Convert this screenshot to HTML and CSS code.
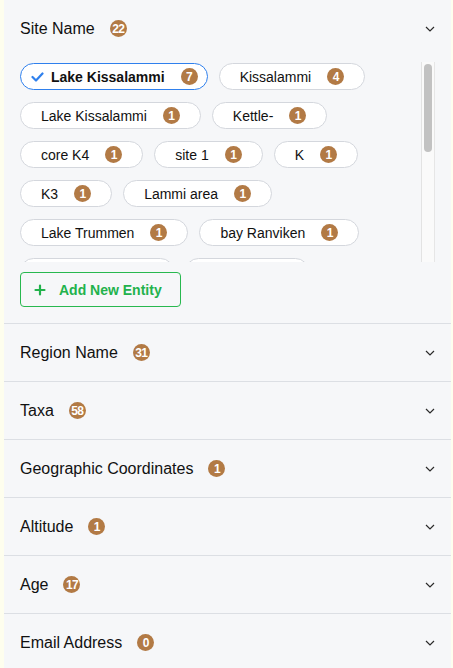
FILE: index.html
```html
<!DOCTYPE html>
<html lang="en">
<head>
<meta charset="utf-8">
<title>Entities</title>
<link rel="stylesheet" href="styles.css">
</head>
<body>
<div class="panel">
  <section class="acc">
    <div class="acc-head">
      <div class="acc-title"><span class="label">Site Name</span><span class="badge">22</span></div>
      <svg class="chev" width="10" height="6" viewBox="0 0 10 6"><polyline points="1,1 5,5 9,1" fill="none" stroke="#2b2b2b" stroke-width="1.2"/></svg>
    </div>
    <div class="acc-body">
      <div class="chip-scroll">
        <div class="chip-viewport">
          <div class="chips">
            <span class="chip selected"><svg class="check" width="13" height="10" viewBox="0 0 13 10"><polyline points="1.5,5 5,8.5 11.5,1.5" fill="none" stroke="#2f80ed" stroke-width="2.2" stroke-linecap="round" stroke-linejoin="round"/></svg><span class="chip-text">Lake Kissalammi</span><span class="badge">7</span></span>
            <span class="chip"><span class="chip-text">Kissalammi</span><span class="badge">4</span></span>
            <span class="chip"><span class="chip-text">Lake Kissalammi</span><span class="badge">1</span></span>
            <span class="chip"><span class="chip-text">Kettle-</span><span class="badge">1</span></span>
            <span class="chip"><span class="chip-text">core K4</span><span class="badge">1</span></span>
            <span class="chip"><span class="chip-text">site 1</span><span class="badge">1</span></span>
            <span class="chip"><span class="chip-text">K</span><span class="badge">1</span></span>
            <span class="chip"><span class="chip-text">K3</span><span class="badge">1</span></span>
            <span class="chip"><span class="chip-text">Lammi area</span><span class="badge">1</span></span>
            <span class="chip"><span class="chip-text">Lake Trummen</span><span class="badge">1</span></span>
            <span class="chip"><span class="chip-text">bay Ranviken</span><span class="badge">1</span></span>
            <span class="chip"><span class="chip-text">Lammi basin</span><span class="badge">1</span></span>
            <span class="chip"><span class="chip-text">core K3</span><span class="badge">1</span></span>
            <span class="chip"><span class="chip-text">Lake Pääjärvi basin</span><span class="badge">1</span></span>
            <span class="chip"><span class="chip-text">Kissalammi core</span><span class="badge">1</span></span>
            <span class="chip"><span class="chip-text">Trummen bay north</span><span class="badge">1</span></span>
            <span class="chip"><span class="chip-text">Ranviken shore</span><span class="badge">1</span></span>
            <span class="chip"><span class="chip-text">Lammi station</span><span class="badge">1</span></span>
            <span class="chip"><span class="chip-text">Lake Ranviken</span><span class="badge">1</span></span>
            <span class="chip"><span class="chip-text">Kettle hole site</span><span class="badge">1</span></span>
            <span class="chip"><span class="chip-text">core K1</span><span class="badge">1</span></span>
            <span class="chip"><span class="chip-text">Pääjärvi south basin</span><span class="badge">1</span></span>
          </div>
        </div>
        <div class="scroll-track"><div class="scroll-thumb"></div></div>
      </div>
      <button class="add-btn" type="button"><svg class="plus" width="16" height="16" viewBox="0 0 16 16"><path d="M8 3.5v9M3.5 8h9" stroke="#22b24c" stroke-width="2.2" stroke-linecap="round"/></svg><span>Add New Entity</span></button>
    </div>
  </section>

  <section class="acc">
    <div class="acc-head">
      <div class="acc-title"><span class="label">Region Name</span><span class="badge">31</span></div>
      <svg class="chev" width="10" height="6" viewBox="0 0 10 6"><polyline points="1,1 5,5 9,1" fill="none" stroke="#2b2b2b" stroke-width="1.2"/></svg>
    </div>
  </section>
  <section class="acc">
    <div class="acc-head">
      <div class="acc-title"><span class="label">Taxa</span><span class="badge">58</span></div>
      <svg class="chev" width="10" height="6" viewBox="0 0 10 6"><polyline points="1,1 5,5 9,1" fill="none" stroke="#2b2b2b" stroke-width="1.2"/></svg>
    </div>
  </section>
  <section class="acc">
    <div class="acc-head">
      <div class="acc-title"><span class="label">Geographic Coordinates</span><span class="badge">1</span></div>
      <svg class="chev" width="10" height="6" viewBox="0 0 10 6"><polyline points="1,1 5,5 9,1" fill="none" stroke="#2b2b2b" stroke-width="1.2"/></svg>
    </div>
  </section>
  <section class="acc">
    <div class="acc-head">
      <div class="acc-title"><span class="label">Altitude</span><span class="badge">1</span></div>
      <svg class="chev" width="10" height="6" viewBox="0 0 10 6"><polyline points="1,1 5,5 9,1" fill="none" stroke="#2b2b2b" stroke-width="1.2"/></svg>
    </div>
  </section>
  <section class="acc">
    <div class="acc-head">
      <div class="acc-title"><span class="label">Age</span><span class="badge">17</span></div>
      <svg class="chev" width="10" height="6" viewBox="0 0 10 6"><polyline points="1,1 5,5 9,1" fill="none" stroke="#2b2b2b" stroke-width="1.2"/></svg>
    </div>
  </section>
  <section class="acc">
    <div class="acc-head">
      <div class="acc-title"><span class="label">Email Address</span><span class="badge">0</span></div>
      <svg class="chev" width="10" height="6" viewBox="0 0 10 6"><polyline points="1,1 5,5 9,1" fill="none" stroke="#2b2b2b" stroke-width="1.2"/></svg>
    </div>
  </section>
</div>
</body>
</html>
```

FILE: styles.css
```css
* { box-sizing: border-box; }

html, body {
  margin: 0;
  padding: 0;
  background: #fefeee;
  font-family: "Liberation Sans", Arial, sans-serif;
  color: #111;
}

.panel {
  margin: 0 2px 0 4px;
  background: #f6f7f9;
  min-height: 668px;
}

.acc {
  border-bottom: 1px solid #dcdfe4;
}

.acc-head {
  height: 57px;
  display: flex;
  align-items: center;
  justify-content: space-between;
  padding: 0 16px;
}

.acc-title {
  display: flex;
  align-items: center;
  gap: 15px;
}

.label {
  font-size: 16px;
  line-height: 20px;
  color: #111;
}

.chev {
  width: 10px;
  height: 6px;
  display: block;
}

.badge {
  width: 17px;
  height: 17px;
  border-radius: 50%;
  background: #b27a45;
  color: #fff;
  font-size: 12px;
  font-weight: 700;
  letter-spacing: -0.6px;
  display: inline-flex;
  align-items: center;
  justify-content: center;
  flex: none;
  line-height: 1;
}

.acc-body {
  padding: 5px 16px 16px;
}

.chip-scroll {
  height: 200px;
  display: flex;
}

.chip-viewport {
  flex: 1;
  min-width: 0;
  overflow: hidden;
}

.scroll-track {
  width: 14px;
  flex: none;
  background: #fafafa;
  border-left: 1px solid #e3e3e3;
  border-right: 1px solid #e6e6e6;
  padding: 2px 2px;
}

.scroll-thumb {
  width: 8px;
  height: 88px;
  background: #c2c2c2;
  border-radius: 4px;
}

.chips {
  display: flex;
  flex-wrap: wrap;
  gap: 12px 11px;
  padding: 1px 0 14px;
}

.chip {
  height: 27px;
  display: inline-flex;
  align-items: center;
  gap: 16px;
  padding: 0 20px 0 20px;
  background: #fff;
  border: 1px solid #d4d7dd;
  border-radius: 14px;
  font-size: 14px;
  color: #111;
  white-space: nowrap;
}

.chip.selected {
  border-color: #2f80ed;
  padding: 0 9px 0 10px;
  gap: 0;
}

.chip.selected .check {
  margin-right: 7px;
}

.chip.selected .chip-text {
  font-weight: 700;
  margin-right: 16px;
}

.add-btn {
  margin-top: 10px;
  height: 35px;
  display: inline-flex;
  align-items: center;
  gap: 11px;
  padding: 0 18px 0 11px;
  background: transparent;
  border: 1px solid #28b84f;
  border-radius: 4px;
  color: #22b24c;
  font-family: "Liberation Sans", Arial, sans-serif;
  font-size: 14px;
  font-weight: 700;
  cursor: pointer;
}

.plus {
  display: block;
}
```
